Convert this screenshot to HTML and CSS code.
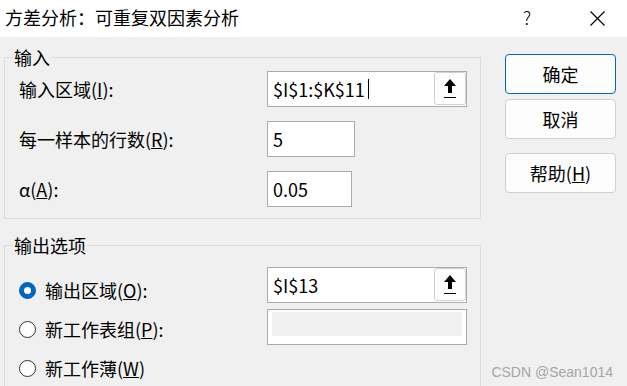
FILE: index.html
```html
<!DOCTYPE html>
<html lang="zh-CN">
<head>
    <meta charset="UTF-8">
    <meta name="viewport" content="width=device-width, initial-scale=1.0">
    <title>方差分析：可重复双因素分析</title>
    <link rel="stylesheet" href="styles.css">
</head>
<body>
    <div class="dialog">
        <div class="titlebar">
            <span class="title">方差分析：可重复双因素分析</span>
            <span class="help">?</span>
            <span class="close">
                <svg width="15" height="15" viewBox="0 0 15 15">
                    <path d="M0.5 0.5 L14.5 14.5 M14.5 0.5 L0.5 14.5" stroke="#000" stroke-width="1.2" fill="none"/>
                </svg>
            </span>
        </div>

        <div class="content">
            <div class="groups">
                <fieldset class="group group-input">
                    <legend>输入</legend>

                    <div class="field">
                        <label>输入区域(<u>I</u>):</label>
                        <div class="textbox wide">
                            <span class="value">$I$1:$K$11</span><span class="caret"></span>
                            <button class="pick">
                                <svg width="12" height="20" viewBox="0 0 12 20">
                                    <path d="M6 0 L0 7 L4 7 L4 14 L8 14 L8 7 L12 7 Z" fill="#000"/>
                                    <rect x="0" y="18" width="12" height="1" fill="#000"/>
                                </svg>
                            </button>
                        </div>
                    </div>

                    <div class="field">
                        <label>每一样本的行数(<u>R</u>):</label>
                        <div class="textbox rows"><span class="value">5</span></div>
                    </div>

                    <div class="field">
                        <label>α(<u>A</u>):</label>
                        <div class="textbox alpha"><span class="value">0.05</span></div>
                    </div>
                </fieldset>

                <fieldset class="group group-output">
                    <legend>输出选项</legend>

                    <div class="output-body">
                        <div class="radios">
                            <div class="radio-row">
                                <span class="radio checked"></span>
                                <span>输出区域(<u>O</u>):</span>
                            </div>
                            <div class="radio-row">
                                <span class="radio"></span>
                                <span>新工作表组(<u>P</u>):</span>
                            </div>
                            <div class="radio-row">
                                <span class="radio"></span>
                                <span>新工作薄(<u>W</u>)</span>
                            </div>
                        </div>

                        <div class="boxes">
                            <div class="textbox wide">
                                <span class="value">$I$13</span>
                                <button class="pick">
                                    <svg width="12" height="20" viewBox="0 0 12 20">
                                        <path d="M6 0 L0 7 L4 7 L4 14 L8 14 L8 7 L12 7 Z" fill="#000"/>
                                        <rect x="0" y="18" width="12" height="1" fill="#000"/>
                                    </svg>
                                </button>
                            </div>
                            <div class="textbox wide disabled">
                                <span class="fill"></span>
                            </div>
                        </div>
                    </div>
                </fieldset>
            </div>

            <div class="actions">
                <button class="btn primary">确定</button>
                <button class="btn">取消</button>
                <button class="btn help-btn">帮助(<u>H</u>)</button>
            </div>
        </div>

        <div class="watermark">CSDN @Sean1014</div>
    </div>
</body>
</html>
```

FILE: styles.css
```css
body {
    margin: 0;
    padding: 0;
    background-color: #f0f0f0;
    font-family: "Noto Sans CJK SC", sans-serif;
    font-size: 18px;
    color: #000;
    overflow: hidden;
}

.dialog {
    position: relative;
    width: 627px;
    height: 386px;
    overflow: hidden;
}

/* title bar */
.titlebar {
    height: 37px;
    background-color: #fff;
    display: flex;
    align-items: center;
    padding-left: 5px;
    padding-bottom: 3px;
    box-sizing: border-box;
}

.title {
    line-height: 20px;
}

.help {
    margin-left: auto;
    line-height: 20px;
    font-weight: 300;
}

.close {
    display: flex;
    margin-left: 59px;
    margin-right: 22px;
    margin-top: 2px;
}

/* body of the dialog */
.content {
    display: flex;
    align-items: flex-start;
    padding: 10px 0 0 4px;
}

.groups {
    width: 477px;
}

.group {
    margin: 0;
    border: 1px solid #dcdcdc;
    box-sizing: border-box;
    width: 477px;
    padding: 4px 0 11px 8px;
}

.group legend {
    padding: 0 1px;
    line-height: 20px;
}

.group-input {
    display: flex;
    flex-direction: column;
    gap: 14px;
}

.field {
    display: flex;
    align-items: center;
    padding-left: 6px;
}

.field label {
    width: 248px;
    line-height: 20px;
}

.textbox {
    height: 36px;
    border: 1px solid #ababab;
    background-color: #fff;
    box-sizing: border-box;
    display: flex;
    align-items: center;
    padding-left: 5px;
}

.textbox .value {
    line-height: 20px;
}

.textbox.wide {
    width: 200px;
}

.textbox.rows {
    width: 88px;
}

.textbox.alpha {
    width: 85px;
}

.caret {
    width: 1px;
    height: 20px;
    background-color: #000;
    margin-left: 3px;
}

.pick {
    margin-left: auto;
    align-self: flex-start;
    width: 32px;
    height: 33px;
    padding: 0;
    border: 1px solid #d0d0d0;
    border-radius: 3px;
    background-color: #fdfdfd;
    display: flex;
    align-items: center;
    justify-content: center;
}

.pick svg {
    margin-top: 1px;
}

.textbox.disabled {
    padding: 2px 4px 8px;
    align-items: stretch;
}

.textbox.disabled .fill {
    flex: 1;
    background-color: #f0f0f0;
}

.group-output {
    margin-top: 16px;
    height: 200px;
}

.output-body {
    display: flex;
    align-items: flex-start;
}

.radios {
    width: 248px;
    padding-left: 6px;
    margin-top: 18px;
    display: flex;
    flex-direction: column;
    gap: 13px;
}

.radio-row {
    display: flex;
    align-items: center;
    height: 26px;
    line-height: 20px;
}

.radio {
    width: 17px;
    height: 17px;
    border: 1px solid #333;
    border-radius: 50%;
    box-sizing: border-box;
    margin-right: 9px;
    background-color: #fff;
    display: flex;
    align-items: center;
    justify-content: center;
}

.radio.checked {
    border-color: #0067c0;
    background-color: #0067c0;
}

.radio.checked::after {
    content: "";
    width: 7px;
    height: 7px;
    border-radius: 50%;
    background-color: #fff;
}

.boxes {
    margin-top: 8px;
    display: flex;
    flex-direction: column;
    gap: 6px;
}

/* buttons on the right */
.actions {
    width: 111px;
    margin-left: 24px;
    margin-top: 7px;
    display: flex;
    flex-direction: column;
}

.btn {
    height: 40px;
    border: 1px solid #d0d0d0;
    border-radius: 4px;
    background-color: #fdfdfd;
    font-family: "Noto Sans CJK SC", sans-serif;
    font-size: 18px;
    color: #000;
    padding: 0;
    margin-bottom: 5px;
}

.btn.primary {
    border-color: #0067c0;
}

.btn.help-btn {
    margin-top: 9px;
}

.watermark {
    position: absolute;
    right: 14px;
    bottom: 6px;
    font-family: "Liberation Sans", Arial, sans-serif;
    font-size: 14px;
    color: #a5a5a5;
}
```
